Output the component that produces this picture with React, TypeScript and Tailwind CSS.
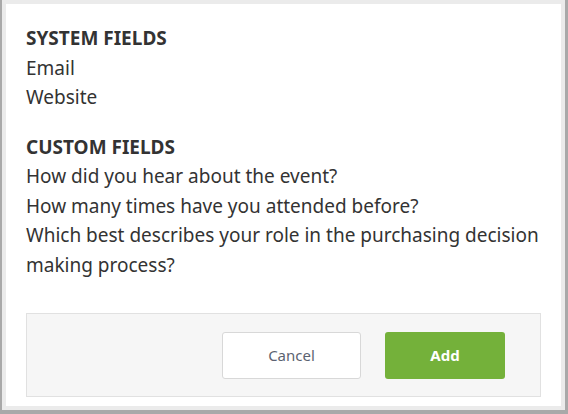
const systemFields = ["Email", "Website"];
const customFields = [
  "How did you hear about the event?",
  "How many times have you attended before?",
  "Which best describes your role in the purchasing decision making process?",
];

function FieldGroup({ title, items }: { title: string; items: string[] }) {
  return (
    <div>
      <div className="font-bold">{title}</div>
      {items.map((item) => (
        <div key={item}>{item}</div>
      ))}
    </div>
  );
}

export default function App() {
  return (
    <div
      className="h-[414px] w-[568px] overflow-hidden bg-[#a9a9a9] pl-[2px]"
      style={{ fontFamily: '"Noto Sans", sans-serif' }}
    >
      <div className="flex h-[410px] w-[563px] flex-col border-4 border-[#ebebeb] bg-white">
        <div className="flex flex-col gap-[20px] px-[20px] pt-[20px] text-[19px] leading-[29.5px] text-[#333]">
          <FieldGroup title="SYSTEM FIELDS" items={systemFields} />
          <FieldGroup title="CUSTOM FIELDS" items={customFields} />
        </div>
        <div className="mx-[20px] mt-auto mb-[9px] flex h-[84px] items-center justify-end gap-[24px] border border-[#e1e1e1] bg-[#f6f6f6] pr-[35px]">
          <button className="h-[47px] w-[139px] rounded-[3px] border border-[#d8d8d8] bg-white text-[15px] text-[#5b6371]">
            Cancel
          </button>
          <button className="h-[47px] w-[120px] rounded-[3px] bg-[#74b13a] text-[15px] font-bold text-white">
            Add
          </button>
        </div>
      </div>
    </div>
  );
}
